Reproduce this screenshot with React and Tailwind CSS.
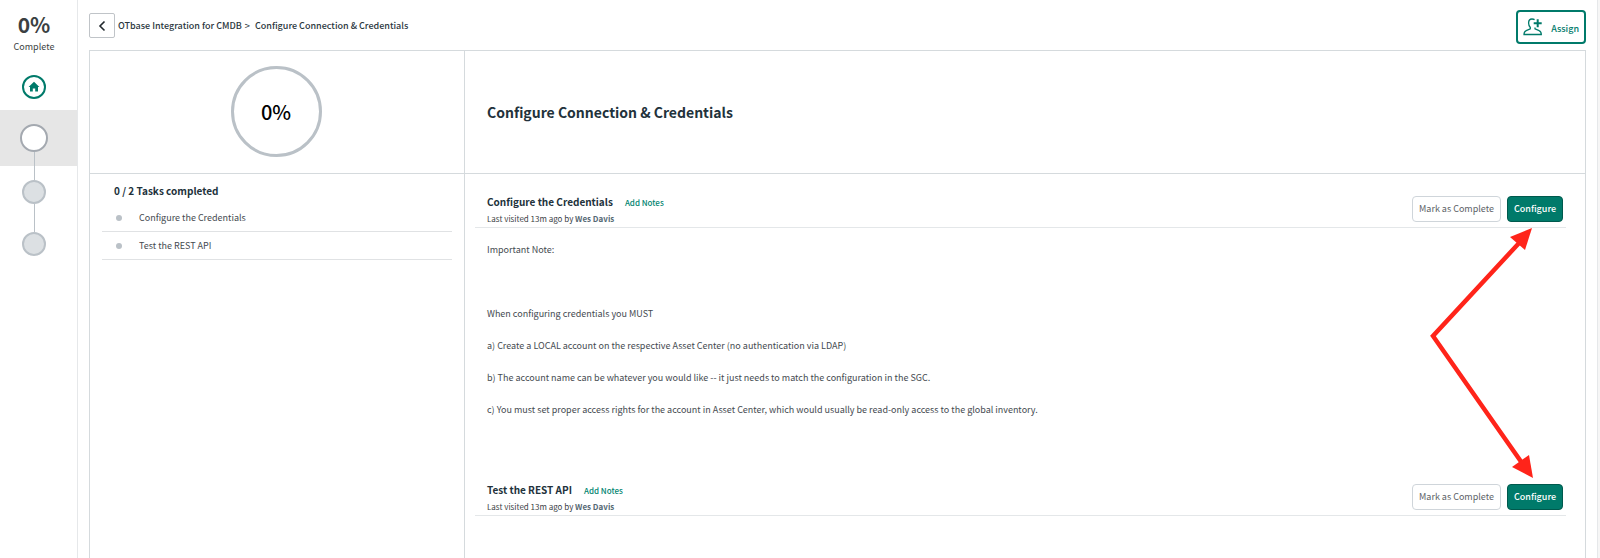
const TASKS = [
  {
    id: "credentials",
    title: "Configure the Credentials",
    notes: [
      "Important Note:",
      "",
      "When configuring credentials you MUST",
      "a) Create a LOCAL account on the respective Asset Center (no authentication via LDAP)",
      "b) The account name can be whatever you would like -- it just needs to match the configuration in the SGC.",
      "c) You must set proper access rights for the account in Asset Center, which would usually be read-only access to the global inventory.",
    ],
  },
  { id: "rest-api", title: "Test the REST API", notes: [] },
];

function HomeIcon() {
  return (
    <svg viewBox="0 0 12 12" className="h-3 w-3" fill="#007a6a" aria-hidden="true">
      <path d="M6 .8 11.4 6H10v4.6H7.2V7.4H4.8v3.2H2V6H.6z" />
    </svg>
  );
}

function AssignIcon() {
  return (
    <svg
      viewBox="0 0 20 18"
      className="h-[18px] w-5"
      fill="none"
      stroke="#007a6a"
      strokeWidth="1.3"
      aria-hidden="true"
    >
      <path d="M11.6 1.6C10.9 1.2 10 1 9 1 6.7 1 5.6 2.6 5.6 5c0 1.9.8 3.5 1.7 4.5v1.3L3.2 12.6c-1.500.6-2.200 1.600-2.200 3.900h17.300c0-2.300-.7-3.300-2.200-3.900l-4.100-1.800V9.500" />
      <path d="M14.700 1.200v8M10.700 5.200h8" strokeWidth="2" />
    </svg>
  );
}

function Sidebar() {
  return (
    <nav className="flex w-[78px] shrink-0 flex-col border-r border-[#e6e8ea] pr-[9px]">
      <div className="flex h-[75px] flex-col items-center pt-3 text-[#3b3f42]">
        <span className="text-[21px] leading-6 font-bold">0%</span>
        <span className="mt-[3px] text-[9px] leading-4">Complete</span>
      </div>
      <div className="flex h-[35px] justify-center">
        <a
          href="#home"
          aria-label="Home"
          className="flex h-6 w-6 items-center justify-center rounded-full border-2 border-[#007a6a]"
        >
          <HomeIcon />
        </a>
      </div>
      <div className="-mr-[9px] flex h-14 flex-col items-center bg-[#e6e6e6] pt-3.5 pr-[9px]">
        <button
          aria-label="Step 1"
          className="h-7 w-7 shrink-0 rounded-full border-2 border-[#a4a9b0] bg-white"
        />
        <span className="w-px grow bg-[#bac1c7]" />
      </div>
      <div className="flex flex-col items-center">
        <span className="h-3.5 w-px bg-[#bac1c7]" />
        <button
          aria-label="Step 2"
          className="h-6 w-6 rounded-full border-2 border-[#bac1c7] bg-[#dce0e3]"
        />
        <span className="h-7 w-px bg-[#bac1c7]" />
        <button
          aria-label="Step 3"
          className="h-6 w-6 rounded-full border-2 border-[#bac1c7] bg-[#dce0e3]"
        />
      </div>
    </nav>
  );
}

function TopBar() {
  return (
    <header className="flex h-[50px] items-start justify-between">
      <div className="flex items-center pt-[13px]">
        <button
          aria-label="Back"
          className="flex h-[25px] w-[26px] items-center justify-center rounded-xs border border-[#c0c4c8]"
        >
          <svg viewBox="0 0 8 12" className="h-3 w-2" fill="none" stroke="#22292d" strokeWidth="1.6">
            <path d="M6.500 1.500 2 6l4.500 4.500" />
          </svg>
        </button>
        <div className="ml-[3px] flex text-[9px] leading-4 font-medium text-[#2b373e]">
          <a href="#integration">OTbase Integration for CMDB</a>
          <span className="mr-[5px] ml-[3px]">&gt;</span>
          <span>Configure Connection &amp; Credentials</span>
        </div>
      </div>
      <button className="mt-2.5 flex h-[34px] w-[70px] items-center justify-between rounded-sm border-2 border-[#007a6a] pr-[5px] pl-[5px] text-[9px] text-[#007a6a]">
        <AssignIcon />
        <span className="pt-1 leading-4 font-medium">Assign</span>
      </button>
    </header>
  );
}

function TaskHeader({ title }) {
  return (
    <div className="flex h-[35px] items-start justify-between border-b border-[#e4e7e9] pr-[3px] pl-3">
      <div className="pt-px">
        <div className="flex items-baseline gap-3">
          <h2 className="text-[10px] leading-4 font-bold text-[#22323b]">{title}</h2>
          <a href="#notes" className="text-[8px] leading-4 font-medium text-[#008470]">
            Add Notes
          </a>
        </div>
        <p className="text-[8px] leading-4 text-[#3c4246]">
          Last visited 13m ago by <span className="font-bold text-[#566975]">Wes Davis</span>
        </p>
      </div>
      <div className="flex gap-1.5 pt-[3px] text-[9px] leading-4">
        <button className="h-[26px] w-[89px] rounded-sm border border-[#cfd5da] text-[#5c5f66]">
          Mark as Complete
        </button>
        <button className="h-[26px] w-14 rounded-sm border border-[#00594d] bg-[#007a6a] font-medium text-white">
          Configure
        </button>
      </div>
    </div>
  );
}

// Red callout that points at both Configure buttons
function Callout() {
  return (
    <svg
      viewBox="0 0 110 254"
      className="pointer-events-none absolute top-[52px] right-[47px] h-[254px] w-[110px]"
      aria-hidden="true"
    >
      <path d="M92 16 5 110 94 237" fill="none" stroke="#ff241a" strokeWidth="4.500" />
      <path d="M104 2 82 11 97 24z" fill="#ff241a" />
      <path d="M105 252 84 241 101 229z" fill="#ff241a" />
    </svg>
  );
}

export default function App() {
  return (
    <div className="flex min-h-screen bg-[#f6f6f6] pr-0.5 font-['Noto_Sans_CJK_SC','Noto_Sans',sans-serif]">
      <div className="flex grow border-r border-[#e6e8ea] bg-white">
        <Sidebar />
        <main className="flex grow flex-col pr-[11px] pl-[11px]">
          <TopBar />
          <div className="grid grow grid-cols-[375px_1fr] grid-rows-[123px_1fr] border-x border-t border-[#d5dadd]">
            <div className="flex justify-center border-r border-b border-[#d5dadd] pt-[15px] pr-0.5">
              <div className="flex h-[91px] w-[91px] items-center justify-center rounded-full border-3 border-[#bac1c7] text-xl leading-6 font-medium text-black">
                0%
              </div>
            </div>
            <div className="flex items-center border-b border-[#d5dadd] pl-[22px]">
              <h1 className="text-[14px] leading-6 font-bold text-[#22323b]">
                Configure Connection &amp; Credentials
              </h1>
            </div>
            <aside className="border-r border-[#d5dadd] px-3 pt-[7px]">
              <h2 className="pl-3 text-[10px] leading-5 font-bold text-[#22323b]">
                0 / 2 Tasks completed
              </h2>
              <ul className="mt-[3px] text-[9px] leading-4 text-[#454a50]">
                {TASKS.map((task) => (
                  <li key={task.id} className="flex h-7 items-center border-b border-[#e0e2e4] pl-3.5">
                    <span className="mr-[17px] h-1.5 w-1.5 rounded-full bg-[#bac1c7]" />
                    {task.title}
                  </li>
                ))}
              </ul>
            </aside>
            <section className="relative pt-[19px] pr-[19px] pb-4 pl-2.5">
              <TaskHeader title={TASKS[0].title} />
              <div className="space-y-4 pt-3.5 pb-[63px] pl-3 text-[9px] leading-4 text-[#454a50]">
                {TASKS[0].notes.map((line, i) => (
                  <p key={i} className="min-h-4">
                    {line}
                  </p>
                ))}
              </div>
              <TaskHeader title={TASKS[1].title} />
              <Callout />
            </section>
          </div>
        </main>
      </div>
    </div>
  );
}
